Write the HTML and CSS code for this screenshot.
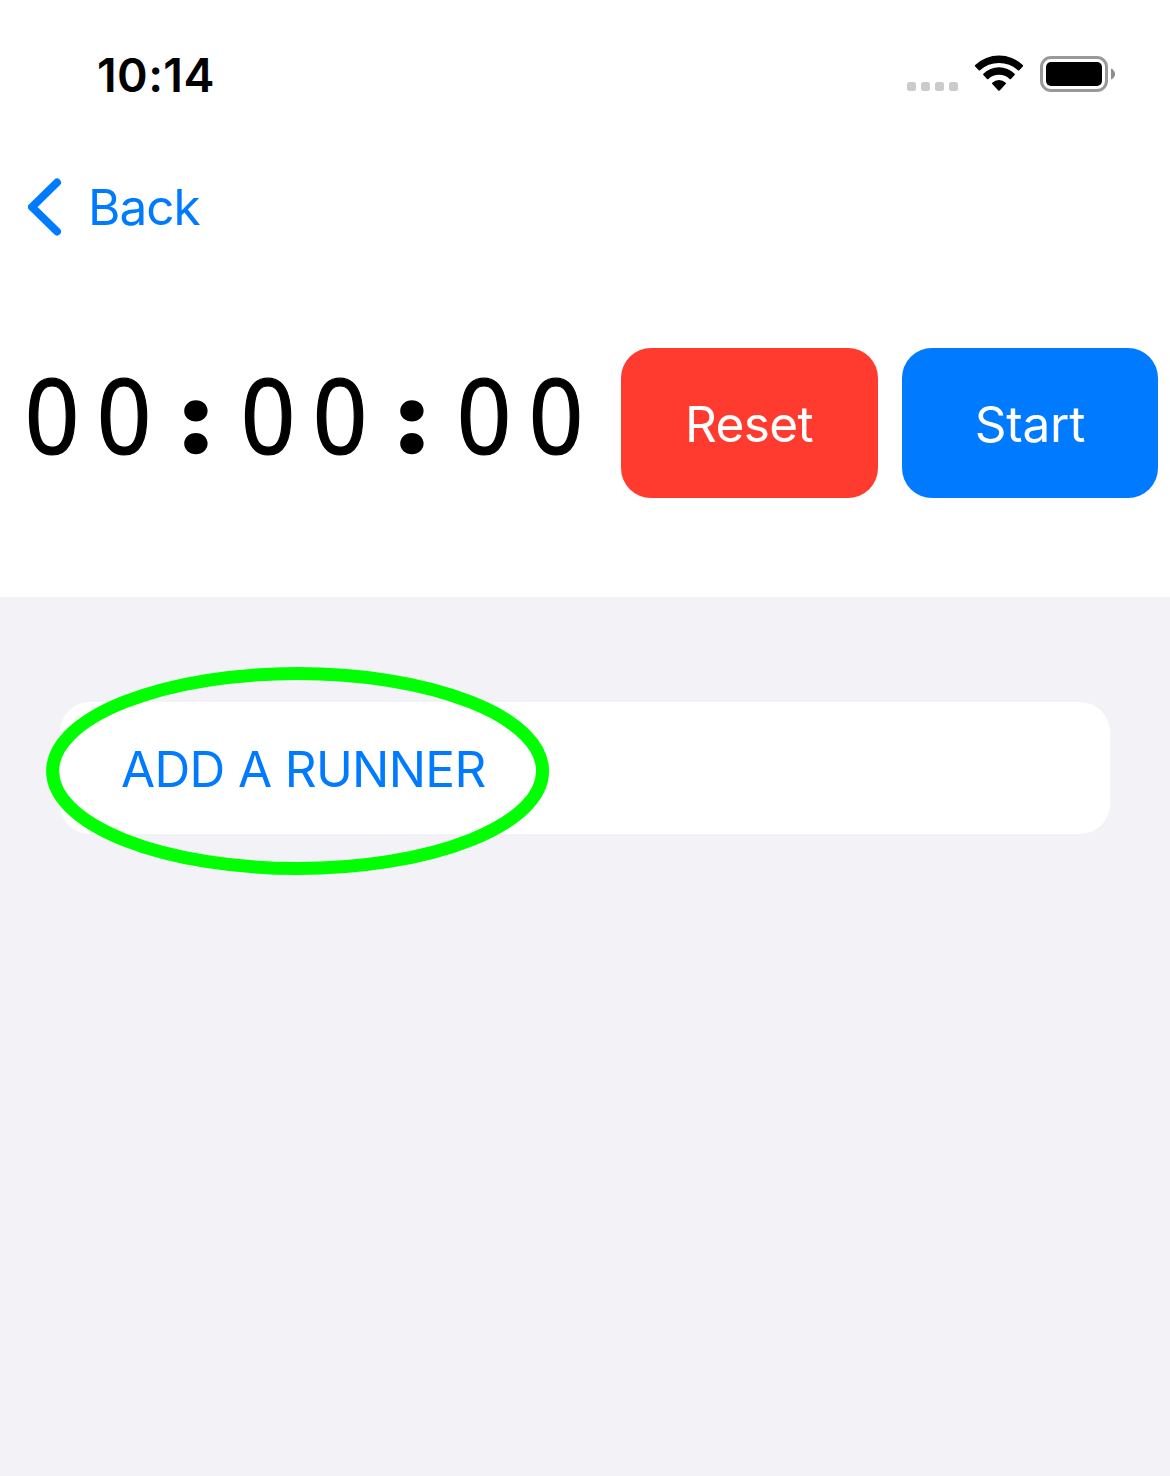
FILE: index.html
```html
<!DOCTYPE html>
<html lang="en">
<head>
<meta charset="utf-8">
<title>Stopwatch</title>
<link rel="stylesheet" href="styles.css">
</head>
<body>
<main class="screen">
  <header class="status">
    <span class="clock">10:14</span>
    <div class="indicators">
      <svg class="signal" width="52" height="10" viewBox="0 0 52 10" fill="#cbcbcb"><rect x="0" y="0" width="9" height="9" rx="2.5"/><rect x="14" y="0" width="9" height="9" rx="2.5"/><rect x="28" y="0" width="9" height="9" rx="2.5"/><rect x="42" y="0" width="9" height="9" rx="2.5"/></svg>
      <svg class="wifi" width="50" height="38" viewBox="0 0 50 38"><path d="M1.200 11A34.500 34.500 0 0 1 48.800 11Q49.400 11.700 48.800 12.400L45.300 16.300Q44.600 16.900 43.900 16.300A28 28 0 0 0 6.100 16.300Q5.400 16.900 4.700 16.300L1.200 12.400Q.6 11.700 1.200 11ZM9.400 19.700A22.300 22.300 0 0 1 40.600 19.700Q41.200 20.400 40.600 21.100L37 24.900Q36.300 25.500 35.600 24.900A15.800 15.800 0 0 0 14.400 24.900Q13.700 25.500 13 24.900L9.400 21.100Q8.800 20.400 9.400 19.700ZM18.300 28.700A10 10 0 0 1 31.700 28.700Q32.400 29.400 31.700 30.100L25.700 36.400Q25 37.100 24.300 36.400L18.300 30.100Q17.600 29.400 18.300 28.700Z"/></svg>
      <svg class="battery" width="76" height="36" viewBox="0 0 76 36"><rect x="1.500" y="1.500" width="65" height="33" rx="9.500" fill="none" stroke="#999" stroke-width="3"/><rect x="6" y="6" width="56" height="24" rx="5"/><path d="M71 12.500Q75 14.500 75 18T71 23.500Z" fill="#8c8c8c"/></svg>
    </div>
  </header>
  <nav class="nav">
    <svg width="34" height="58" viewBox="0 0 34 58"><path d="M29 4.500L4 29L29 53.500" fill="none" stroke="#007aff" stroke-width="8" stroke-linecap="round" stroke-linejoin="round"/></svg>
    <span class="back">Back</span>
  </nav>
  <section class="timer">
    <div class="digits"><span>0</span><span>0</span><span class="colon">:</span><span>0</span><span>0</span><span class="colon">:</span><span>0</span><span>0</span></div>
    <button class="btn reset"><span>Reset</span></button>
    <button class="btn start"><span>Start</span></button>
  </section>
  <section class="list">
    <div class="row">
      <span class="add">ADD A RUNNER</span>
      <svg class="ring" width="504" height="210" viewBox="0 0 504 210"><ellipse cx="251.600" cy="105" rx="245" ry="97.500" fill="none" stroke="#00ff00" stroke-width="13"/></svg>
    </div>
  </section>
</main>
</body>
</html>
```
FILE: styles.css
```css
* { box-sizing: border-box; }
body { margin: 0; background: #fff; font-family: Inter, sans-serif; color: #000; }
.screen { width: 1170px; height: 1476px; display: flex; flex-direction: column; overflow: hidden; }
.status { height: 150px; padding: 0 54px 0 97px; display: flex; justify-content: space-between; }
.clock { padding-top: 45px; font-size: 46.5px; font-weight: 600; line-height: 60px; letter-spacing: 0.4px; }
.indicators { display: flex; align-items: flex-start; }
.signal { margin: 82px 15px 0 0; }
.wifi { margin: 54px 16px 0 0; }
.battery { margin-top: 56px; }
.nav { height: 114px; padding-left: 28px; display: flex; align-items: center; color: #007aff; }
.back { margin-left: 26px; font-size: 49.5px; line-height: 60px; letter-spacing: -1px; }
.timer { height: 333px; padding: 84px 12px 0 16px; display: flex; align-items: flex-start; }
.digits { width: 605px; height: 150px; display: flex; font-family: "Noto Sans", sans-serif; font-size: 105px; line-height: 132px; }
.digits span { width: 72px; text-align: center; transform: scaleX(0.91); -webkit-text-stroke: 1.2px #000; }
.digits .colon { font-family: Lato, sans-serif; font-weight: 700; font-size: 91px; line-height: 133px; -webkit-text-stroke: 7.5px #000; transform: scaleX(1.1); }
.btn { height: 150px; border: 0; border-radius: 30px; padding: 2px 0 0; color: #fff; font-family: inherit; font-size: 49.5px; line-height: 60px; }
.reset { width: 257px; background: #ff3b30; margin-right: 24px; padding-right: 1px; letter-spacing: -0.6px; }
.start { width: 256px; background: #007aff; letter-spacing: -0.2px; }
.list { flex: 1; padding: 105px 60px 0; background: #f2f2f7; }
.row { position: relative; height: 132px; padding: 1px 0 0 61px; display: flex; align-items: center; border-radius: 30px; background: #fff; color: #007aff; }
.add { font-size: 49.5px; line-height: 60px; white-space: nowrap; letter-spacing: -0.65px; }
.ring { position: absolute; left: -14px; top: -36px; }
```
